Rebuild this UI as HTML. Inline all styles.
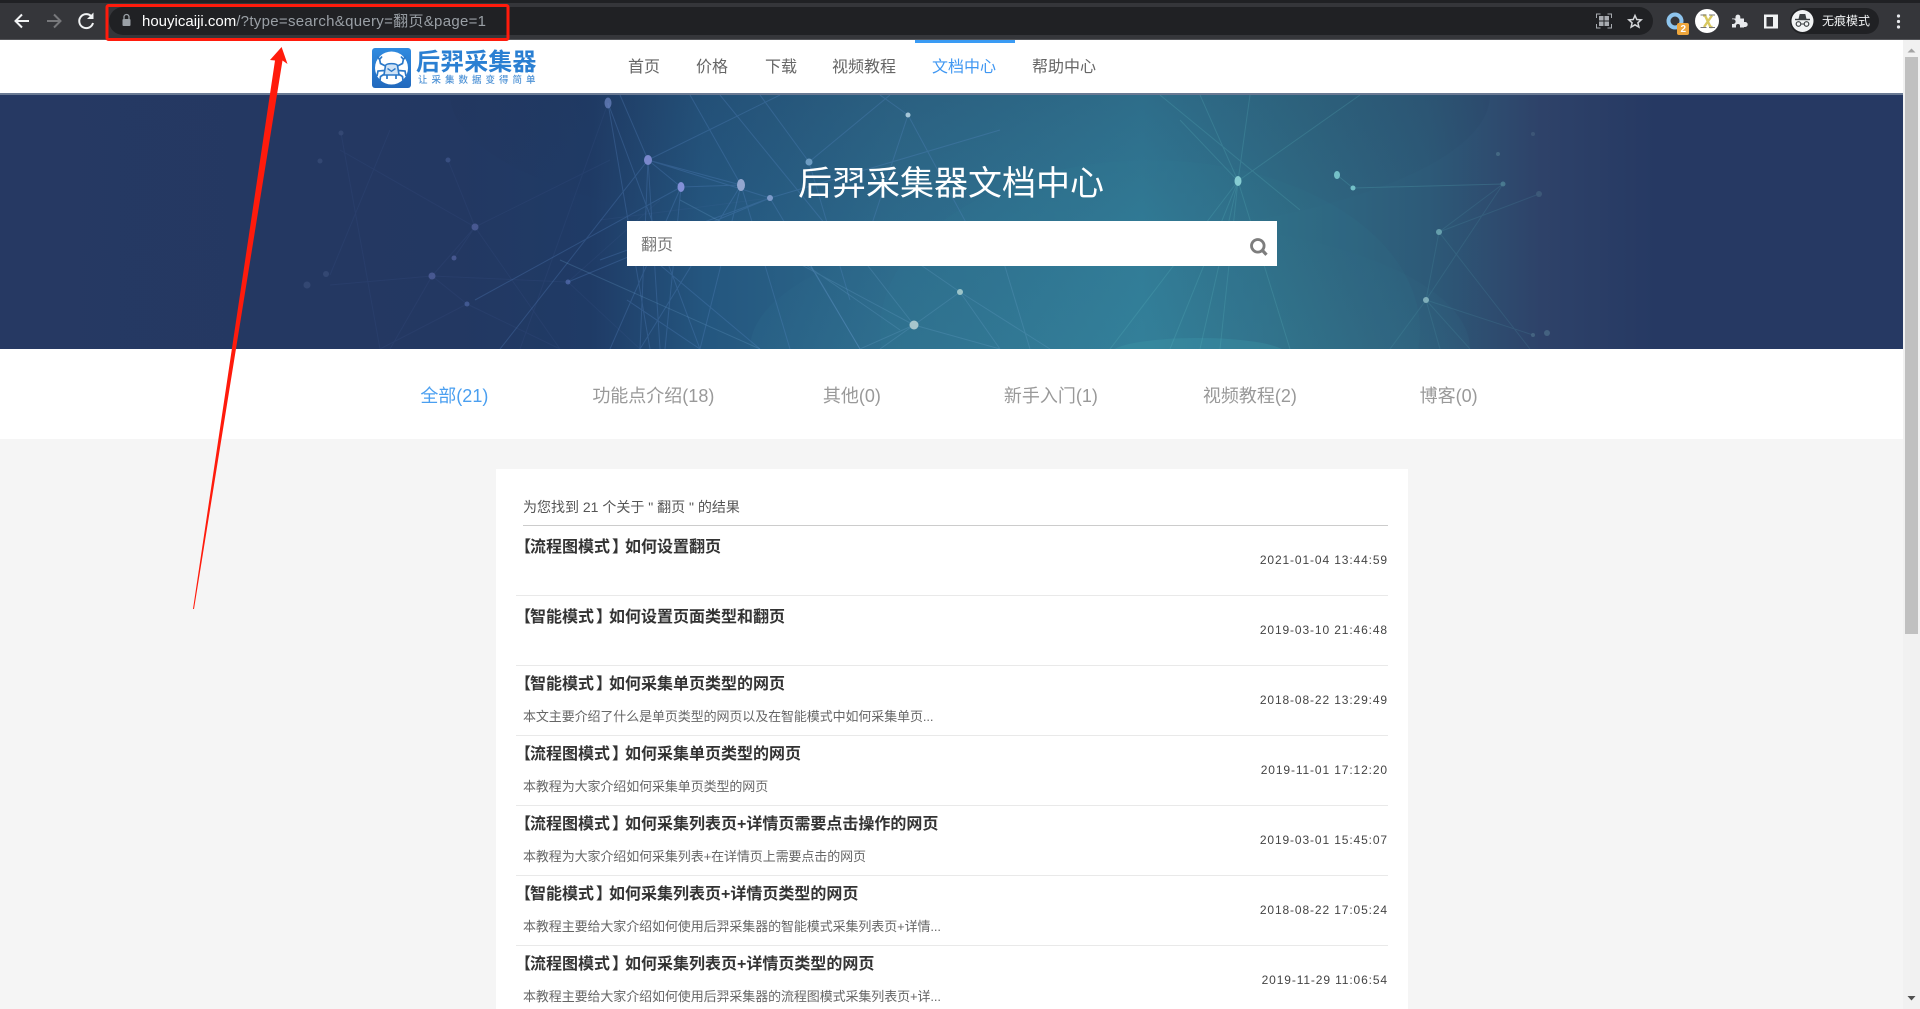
<!DOCTYPE html>
<html lang="zh"><head><meta charset="utf-8"><title>后羿采集器文档中心</title>
<style>
html,body{margin:0;padding:0;width:1920px;height:1009px;overflow:hidden;background:#f5f5f5;font-family:"Liberation Sans","Noto Sans CJK SC",sans-serif}
.a{position:absolute;white-space:nowrap}
.nav{top:53px;height:30px;line-height:30px;font-size:16px;color:#666}
.tab{top:380px;height:32px;line-height:32px;font-size:18px;color:#999;width:198.67px;text-align:center}
.t{left:513px;height:24px;line-height:24px;font-size:16px;font-weight:700;color:#333}
.t i,.t u,.t s{font-style:normal;text-decoration:none;position:relative}
.t i{left:2px}.t u{left:1px}.t s{left:3px}
.d{left:523px;height:20px;line-height:20px;font-size:13px;color:#666;letter-spacing:-.1px}
.dt{right:532px;height:16px;line-height:16px;font-size:12px;color:#444;letter-spacing:.88px}
.s{left:516px;width:872px;height:1px;background:#e9e9e9}
</style></head><body>
<!-- browser chrome -->
<div class="a" style="left:0;top:0;width:1920px;height:40px;background:#35363a"></div>
<div class="a" style="left:0;top:0;width:1920px;height:3px;background:#202124"></div>
<div class="a" style="left:0;top:39px;width:1920px;height:1px;background:#55565a"></div>
<div class="a" style="left:109px;top:7px;width:1544px;height:28px;border-radius:14px;background:#202124"></div>
<svg class="a" style="left:0;top:0" width="1920" height="40" viewBox="0 0 1920 40" fill="none">
<path d="M29 21H16M22 14.500L15.500 21L22 27.500" stroke="#f1f3f4" stroke-width="2"/>
<path d="M47 21H60M54 14.500L60.500 21L54 27.500" stroke="#77787b" stroke-width="2"/>
<path d="M91.500 16.500A7 7 0 1 0 93 23" stroke="#f1f3f4" stroke-width="2"/><path d="M93.500 12.500V19H87Z" fill="#f1f3f4"/>
<rect x="122.500" y="19" width="8" height="7" rx="1" fill="#9aa0a6"/><path d="M124 19v-2a2.500 2.500 0 0 1 5 0v2" stroke="#9aa0a6" stroke-width="1.300"/>
<path d="M1596.500 18v-4h4M1607.500 14h4v4M1611.500 24v4h-4M1600.500 28h-4v-4" stroke="#a8abb0" stroke-width="1"/>
<rect x="1599" y="16" width="4.500" height="4.500" fill="#a8abb0"/><rect x="1604.500" y="16" width="4.500" height="4.500" fill="#a8abb0"/><rect x="1599" y="21.500" width="4.500" height="4.500" fill="#a8abb0"/><rect x="1604.500" y="21.500" width="4.500" height="4.500" fill="#a8abb0"/>
<path d="M1635 15.500l1.800 4 4.400.4-3.300 2.900 1 4.300-3.900-2.300-3.900 2.300 1-4.300-3.300-2.900 4.400-.4z" stroke="#d5d7da" stroke-width="1.500"/>
<circle cx="1675" cy="21" r="6.500" stroke="#8ec5ee" stroke-width="4"/>
<rect x="1677" y="23" width="12" height="12" rx="2" fill="#eea63c"/>
<circle cx="1707" cy="21" r="12" fill="#fff"/>
<path d="M1703 15.500h2l5.500 11.500h2M1712 15.500l-8 11.500" stroke="#d8c860" stroke-width="2.400"/><path d="M1700.500 15h6M1709 15h6M1700.500 27.500h6M1709 27.500h6" stroke="#777" stroke-width="1"/>
<path d="M1732 18.500h3.500v-1.500a2.400 2.400 0 0 1 4.800 0v1.500h3.700v3.500h1.200a2.500 2.500 0 0 1 0 5H1744v.500h-4v-1.500a2 2 0 0 0-4 0v1.500h-4v-3.500h1.200a2.400 2.400 0 0 0 0-4.800H1732z" fill="#e8eaed"/>
<rect x="1764" y="14.500" width="14" height="14" fill="#f1f3f4"/><rect x="1766.500" y="17" width="6.500" height="9.500" fill="#35363a"/>
<rect x="1790" y="8" width="89" height="26" rx="13" fill="#202124"/>
<circle cx="1802.500" cy="21" r="11" fill="#f1f3f4"/>
<path d="M1798.500 19l1.200-5h5.600l1.200 5z" fill="#3c4043"/><path d="M1795 19.500h15" stroke="#3c4043" stroke-width="1.400"/>
<circle cx="1798.500" cy="24" r="2.300" stroke="#3c4043" stroke-width="1.200"/><circle cx="1806.500" cy="24" r="2.300" stroke="#3c4043" stroke-width="1.200"/><path d="M1801 24h3" stroke="#3c4043"/>
<circle cx="1898.500" cy="16" r="1.600" fill="#e8eaed"/><circle cx="1898.500" cy="21.500" r="1.600" fill="#e8eaed"/><circle cx="1898.500" cy="27" r="1.600" fill="#e8eaed"/>
</svg>
<div class="a" style="left:142px;top:11px;height:22px;line-height:22px;font-size:15px;letter-spacing:.3px;color:#9aa0a6"><span style="color:#fff;letter-spacing:0">houyicaiji.com</span>/?type=search&amp;query=翻页&amp;page=1</div>
<div class="a" style="left:1680.500px;top:24.500px;height:10px;line-height:10px;font-size:10px;font-weight:700;color:#fff">2</div>
<div class="a" style="left:1822px;top:11px;height:20px;line-height:20px;font-size:12px;color:#f1f3f4">无痕模式</div>

<!-- header -->
<div class="a" style="left:0;top:40px;width:1903px;height:54px;background:#fff"></div>
<div class="a" style="left:0;top:93px;width:1903px;height:2px;background:#6a7a94"></div>
<div class="a" style="left:915px;top:40px;width:100px;height:3px;background:#3a9bf4"></div>
<svg class="a" style="left:372px;top:48px" width="40" height="40" viewBox="0 0 40 40" fill="none">
<defs><linearGradient id="lg" x1="0" y1="0" x2="0" y2="1"><stop offset="0" stop-color="#2f8be0"/><stop offset="1" stop-color="#2269bd"/></linearGradient></defs>
<rect width="39" height="40" rx="3" fill="url(#lg)"/><circle cx="19.500" cy="20" r="16.500" fill="#fff"/>
<path d="M13.500 17.500c1-2.500 11-2.500 12 0l1.500 9.500H12z" fill="#cfe2f5" stroke="#2a78c8" stroke-width="1.600"/>
<path d="M15.500 20.500l4 2.800 4-2.800" stroke="#2a78c8" stroke-width="1.400"/>
<path d="M13.500 18l-5-2.500-1-4.500M25.500 18l5-2.500 1-4.500M5.500 8.500l2 3 2.500-3M33.500 8.500l-2 3-2.500-3" stroke="#2a78c8" stroke-width="1.700"/>
<path d="M12.500 22.500l-6.500.5-1 5M26.500 22.500l6.500.5 1 5M12.500 26l-4 2.500-.5 4M26.500 26l4 2.500.5 4M15 27v4M24 27v4" stroke="#2a78c8" stroke-width="1.700"/>
</svg>
<div class="a" style="left:416px;top:48px;height:30px;line-height:30px;font-size:24px;font-weight:700;color:#2a7fd2;letter-spacing:.1px">后羿采集器</div>
<div class="a" style="left:418px;top:75px;height:12px;line-height:12px;font-size:9.500px;font-weight:500;color:#4f93d6;letter-spacing:4px">让采集数据变得简单</div>
<div class="a nav" style="left:628px">首页</div>
<div class="a nav" style="left:696px">价格</div>
<div class="a nav" style="left:765px">下载</div>
<div class="a nav" style="left:832px">视频教程</div>
<div class="a nav" style="left:932px;color:#3f97f2">文档中心</div>
<div class="a nav" style="left:1032px">帮助中心</div>

<!-- hero -->
<svg class="a" style="left:0;top:95px" width="1903" height="254" viewBox="0 95 1903 254" fill="none">
<defs>
<linearGradient id="h" x1="0" y1="0" x2="1" y2="0">
<stop offset="0" stop-color="#263963"/><stop offset=".24" stop-color="#233862"/><stop offset=".31" stop-color="#1f3b66"/><stop offset=".37" stop-color="#24567f"/><stop offset=".47" stop-color="#2d6a8b"/><stop offset=".6" stop-color="#317a96"/><stop offset=".68" stop-color="#2f6a84"/><stop offset=".75" stop-color="#2d5a78"/><stop offset=".81" stop-color="#2e4269"/><stop offset=".87" stop-color="#263963"/><stop offset="1" stop-color="#263963"/>
</linearGradient>
<radialGradient id="dk" cx=".5" cy="0" r="1"><stop offset="0" stop-color="#1f2f4f" stop-opacity=".4"/><stop offset=".6" stop-color="#1f2f4f" stop-opacity=".14"/><stop offset="1" stop-color="#1f2f4f" stop-opacity="0"/></radialGradient>
<radialGradient id="gl" cx=".5" cy="1" r="1"><stop offset="0" stop-color="#45a5b5" stop-opacity=".22"/><stop offset="1" stop-color="#45a5b5" stop-opacity="0"/></radialGradient>
</defs>
<rect x="0" y="95" width="1903" height="254" fill="url(#h)"/>
<ellipse cx="970" cy="95" rx="520" ry="150" fill="url(#dk)"/>
<ellipse cx="1110" cy="349" rx="360" ry="130" fill="url(#gl)"/>
<ellipse cx="1198" cy="354" rx="88" ry="16" fill="#3f9fae" opacity=".3"/>
<ellipse cx="1150" cy="330" rx="270" ry="170" fill="#3b8aa2" opacity=".07"/>
<g stroke="#5f8fd0" stroke-width="1" opacity=".26">
<path d="M648 160L741 185M648 160L681 187M648 160L500 349M648 160L770 198M648 160L780 95M648 160L640 349M648 160L660 349M648 160L620 95"/>
<path d="M681 187L741 185M681 187L475 300M681 187L610 349M681 187L665 349M741 185L700 349M741 185L640 349M741 185L790 349M741 185L690 95M770 198L600 260M770 198L568 282M770 198L860 349M770 198L1000 130"/>
<path d="M809 162L760 95M809 162L850 300M809 162L890 95M608 103L700 349M608 103L650 349M908 115L860 260M908 115L970 230M908 115L880 95M720 95L830 230M660 265L760 349M627 300L700 349"/>
</g>
<g stroke="#6fa9cf" stroke-width="1" opacity=".24">
<path d="M914 325L680 200M914 325L960 292M914 325L880 349M914 325L860 349M914 325L1000 349M914 325L840 230M960 292L870 230M960 292L1000 349M960 292L1050 349M770 240L900 330M560 260L760 349M790 230L860 349M1000 250L1030 349"/>
</g>
<g stroke="#5f7fc0" stroke-width="1" opacity=".09">
<path d="M475 227L340 150M475 227L432 276M475 227L454 258M475 227L610 160M475 227L448 160M475 227L560 349M432 276L330 285M432 276L467 304M432 276L390 349M467 304L560 349M467 304L380 349M568 282L660 200M568 282L432 276M330 275L390 130M341 133L380 349M608 103L520 349M568 282L640 349M600 220L770 198"/>
</g>
<g stroke="#66c2c8" stroke-width="1" opacity=".2">
<path d="M1238 181L1200 95M1238 181L1250 95M1238 181L1360 95M1238 181L1110 349M1238 181L1170 349M1238 181L1200 349M1238 181L1220 349M1238 181L1290 349M1238 181L1180 120M1160 95L1300 210M1353 188L1503 184M1337 175L1353 188"/>
</g>
<g stroke="#66c2c8" stroke-width="1" opacity=".13">
<path d="M1426 300L1439 232M1426 300L1503 184M1426 300L1390 349M1426 300L1440 349M1426 300L1470 349M1426 300L1533 335M1439 232L1530 349M1439 232L1503 184M1439 232L1539 194"/>
</g>
<g>
<ellipse cx="608" cy="103" rx="3.500" ry="5.500" fill="#6e86c4" opacity=".7"/><ellipse cx="648" cy="160" rx="4" ry="5" fill="#7a88cc"/><ellipse cx="681" cy="187" rx="3.500" ry="5" fill="#8390d8"/><ellipse cx="741" cy="185" rx="4" ry="6" fill="#93a6cf"/><circle cx="770" cy="198" r="3" fill="#7d9ac9"/><circle cx="809" cy="162" r="3.500" fill="#6d9cc2"/><circle cx="908" cy="115" r="2.500" fill="#a5c6d8"/><circle cx="914" cy="325" r="4.500" fill="#a8c6cc"/><circle cx="960" cy="292" r="3" fill="#9cc4c8"/>
<g opacity=".65"><circle cx="475" cy="227" r="3.500" fill="#5a68a8"/><circle cx="454" cy="258" r="2.500" fill="#5a68a8"/><circle cx="432" cy="276" r="3.500" fill="#5a68a8"/><circle cx="467" cy="304" r="2.500" fill="#5068a8"/><circle cx="568" cy="282" r="2.500" fill="#5a72b8"/><circle cx="448" cy="160" r="2.500" fill="#445a90"/><circle cx="326" cy="274" r="3" fill="#3c4f7c"/><circle cx="307" cy="285" r="3.500" fill="#3c4f7c"/><circle cx="341" cy="133" r="2.500" fill="#3c4f7c"/><circle cx="320" cy="161" r="2.500" fill="#3c4f7c"/></g>
<ellipse cx="1238" cy="181" rx="3.500" ry="5" fill="#86cdd2"/><ellipse cx="1337" cy="175" rx="3" ry="4" fill="#74c0c8"/><circle cx="1353" cy="188" r="2.500" fill="#74c0c8"/>
<g opacity=".8"><circle cx="1503" cy="184" r="2.500" fill="#4f8396"/><circle cx="1539" cy="194" r="3" fill="#405e7c"/><circle cx="1439" cy="232" r="3" fill="#74b0ba"/><circle cx="1426" cy="300" r="3" fill="#92c0c8"/><circle cx="1547" cy="333" r="3" fill="#4a6a86"/><circle cx="1533" cy="335" r="2" fill="#4a6a86"/><circle cx="1498" cy="154" r="2" fill="#4a7088"/><circle cx="1533" cy="134" r="2" fill="#405a7a"/></g>
</g>
</svg>
<div class="a" style="left:798px;top:159px;height:50px;line-height:50px;font-size:34px;color:#fff">后羿采集器文档中心</div>
<div class="a" style="left:627px;top:221px;width:650px;height:45px;background:#fff"></div>
<div class="a" style="left:641px;top:233.500px;height:24px;line-height:24px;font-size:16px;color:#777">翻页</div>
<svg class="a" style="left:1249px;top:237px" width="20" height="20" viewBox="0 0 20 20" fill="none"><circle cx="8.800" cy="8.800" r="6.300" stroke="#7d7d7d" stroke-width="2.800"/><path d="M13.500 13.500L17.500 17.800" stroke="#7d7d7d" stroke-width="3.200"/></svg>

<!-- tabs -->
<div class="a" style="left:0;top:349px;width:1903px;height:90px;background:#fff"></div>
<div class="a tab" style="left:355px;color:#4a9ff0">全部(21)</div>
<div class="a tab" style="left:554px">功能点介绍(18)</div>
<div class="a tab" style="left:752.500px">其他(0)</div>
<div class="a tab" style="left:951.500px">新手入门(1)</div>
<div class="a tab" style="left:1150.500px">视频教程(2)</div>
<div class="a tab" style="left:1349.300px">博客(0)</div>

<!-- card -->
<div class="a" style="left:496px;top:469px;width:912px;height:540px;background:#fff"></div>
<div class="a" style="left:523px;top:497px;height:20px;line-height:20px;font-size:14px;color:#555">为您找到 21 个关于 " 翻页 " 的结果</div>
<div class="a" style="left:523px;top:525px;width:865px;height:1px;background:#ccc"></div>

<div class="a t" style="top:536px"><i>【</i><u>流程图模式</u><s>】</s>如何设置翻页</div>
<div class="a dt" style="top:552px">2021-01-04 13:44:59</div>
<div class="a s" style="top:595px"></div>
<div class="a t" style="top:606px"><i>【</i><u>智能模式</u><s>】</s>如何设置页面类型和翻页</div>
<div class="a dt" style="top:622px">2019-03-10 21:46:48</div>
<div class="a s" style="top:665px"></div>
<div class="a t" style="top:673px"><i>【</i><u>智能模式</u><s>】</s>如何采集单页类型的网页</div>
<div class="a d" style="top:707px">本文主要介绍了什么是单页类型的网页以及在智能模式中如何采集单页...</div>
<div class="a dt" style="top:692px">2018-08-22 13:29:49</div>
<div class="a s" style="top:735px"></div>
<div class="a t" style="top:743px"><i>【</i><u>流程图模式</u><s>】</s>如何采集单页类型的网页</div>
<div class="a d" style="top:777px">本教程为大家介绍如何采集单页类型的网页</div>
<div class="a dt" style="top:762px">2019-11-01 17:12:20</div>
<div class="a s" style="top:805px"></div>
<div class="a t" style="top:813px"><i>【</i><u>流程图模式</u><s>】</s>如何采集列表页+详情页需要点击操作的网页</div>
<div class="a d" style="top:847px">本教程为大家介绍如何采集列表+在详情页上需要点击的网页</div>
<div class="a dt" style="top:832px">2019-03-01 15:45:07</div>
<div class="a s" style="top:875px"></div>
<div class="a t" style="top:883px"><i>【</i><u>智能模式</u><s>】</s>如何采集列表页+详情页类型的网页</div>
<div class="a d" style="top:917px">本教程主要给大家介绍如何使用后羿采集器的智能模式采集列表页+详情...</div>
<div class="a dt" style="top:902px">2018-08-22 17:05:24</div>
<div class="a s" style="top:945px"></div>
<div class="a t" style="top:953px"><i>【</i><u>流程图模式</u><s>】</s>如何采集列表页+详情页类型的网页</div>
<div class="a d" style="top:987px">本教程主要给大家介绍如何使用后羿采集器的流程图模式采集列表页+详...</div>
<div class="a dt" style="top:972px">2019-11-29 11:06:54</div>

<!-- scrollbar -->
<div class="a" style="left:1903px;top:40px;width:17px;height:969px;background:#f1f1f1"></div>
<div class="a" style="left:1905px;top:57px;width:13px;height:577px;background:#c0c0c0"></div>
<svg class="a" style="left:1903px;top:40px" width="17" height="969" viewBox="0 0 17 969"><path d="M8.500 8.500L12.500 12.500H4.500Z" fill="#a3a3a3"/><path d="M4.500 956H12.500L8.500 960.500Z" fill="#505050"/></svg>

<!-- annotation -->
<svg class="a" style="left:0;top:0" width="1920" height="1009" viewBox="0 0 1920 1009" fill="none">
<rect x="107" y="5.500" width="401" height="34" rx="1.500" stroke="#ff1b0c" stroke-width="3"/>
<path d="M281.600 47L287.500 64L282.500 60.500L194 609L193 609L275 60.500L270 60Z" fill="#ff1b0c"/>
</svg>
</body></html>
